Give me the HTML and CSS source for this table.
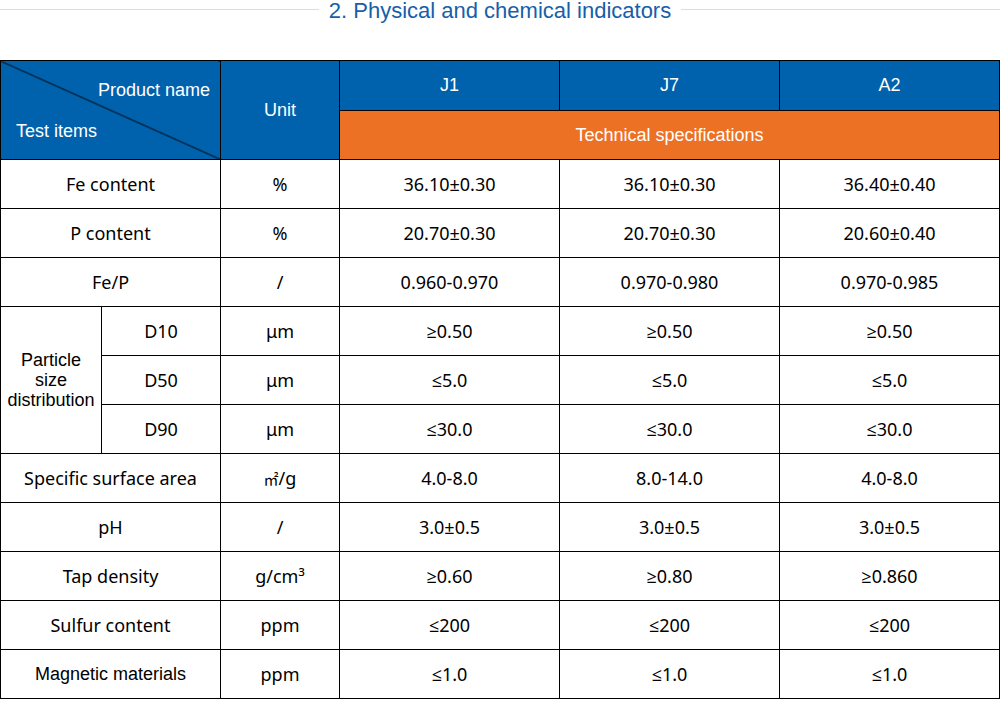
FILE: index.html
```
<!DOCTYPE html>
<html lang="en">
<head>
<meta charset="utf-8">
<title>Physical and chemical indicators</title>
<link rel="stylesheet" href="styles.css">
</head>
<body>
<div class="title-row">
  <span class="rule"></span>
  <h2 class="title">2. Physical and chemical indicators</h2>
  <span class="rule"></span>
</div>
<table class="spec">
  <colgroup>
    <col class="c-a"><col class="c-b"><col class="c-unit"><col class="c-v"><col class="c-v"><col class="c-v">
  </colgroup>
  <thead>
    <tr>
      <th class="hd diag" colspan="2" rowspan="2">
        <div class="diag-in">
          <span class="pn">Product name</span>
          <span class="ti">Test items</span>
        </div>
      </th>
      <th class="hd" rowspan="2">Unit</th>
      <th class="hd">J1</th>
      <th class="hd">J7</th>
      <th class="hd">A2</th>
    </tr>
    <tr>
      <th class="hd orange" colspan="3">Technical specifications</th>
    </tr>
  </thead>
  <tbody>
    <tr><td colspan="2">Fe content</td><td>%</td><td>36.10±0.30</td><td>36.10±0.30</td><td>36.40±0.40</td></tr>
    <tr><td colspan="2">P content</td><td>%</td><td>20.70±0.30</td><td>20.70±0.30</td><td>20.60±0.40</td></tr>
    <tr><td colspan="2">Fe/P</td><td>/</td><td>0.960-0.970</td><td>0.970-0.980</td><td>0.970-0.985</td></tr>
    <tr><td class="arial psd" rowspan="3">Particle<br>size<br>distribution</td><td>D10</td><td>μm</td><td>≥0.50</td><td>≥0.50</td><td>≥0.50</td></tr>
    <tr><td>D50</td><td>μm</td><td>≤5.0</td><td>≤5.0</td><td>≤5.0</td></tr>
    <tr><td>D90</td><td>μm</td><td>≤30.0</td><td>≤30.0</td><td>≤30.0</td></tr>
    <tr><td colspan="2">Specific surface area</td><td><span class="cjk">㎡</span>/g</td><td>4.0-8.0</td><td>8.0-14.0</td><td>4.0-8.0</td></tr>
    <tr><td colspan="2">pH</td><td>/</td><td>3.0±0.5</td><td>3.0±0.5</td><td>3.0±0.5</td></tr>
    <tr><td colspan="2">Tap density</td><td>g/cm³</td><td>≥0.60</td><td>≥0.80</td><td>≥0.860</td></tr>
    <tr><td colspan="2">Sulfur content</td><td>ppm</td><td>≤200</td><td>≤200</td><td>≤200</td></tr>
    <tr><td class="arial" colspan="2">Magnetic materials</td><td>ppm</td><td>≤1.0</td><td>≤1.0</td><td>≤1.0</td></tr>
  </tbody>
</table>
</body>
</html>
```
FILE: styles.css
```
html, body {
  margin: 0;
  padding: 0;
  background: #ffffff;
}

body {
  width: 1000px;
  font-family: "Noto Sans", "Open Sans", sans-serif;
  color: #000000;
}

.title-row {
  display: flex;
  align-items: center;
  height: 22px;
  gap: 10px;
  margin-bottom: 38px;
}

.rule {
  flex: 1;
  height: 1px;
  background: #dddddd;
  margin-top: -3px;
}

.title {
  margin: 0;
  font-family: "Liberation Sans", Arial, sans-serif;
  font-weight: normal;
  font-size: 22px;
  line-height: 22px;
  color: #1660a9;
  white-space: nowrap;
}

.spec {
  border-collapse: collapse;
  table-layout: fixed;
  width: 999px;
}

.c-a { width: 101px; }
.c-b { width: 119px; }
.c-unit { width: 119px; }
.c-v { width: 220px; }

.spec th,
.spec td {
  border: 1px solid #000000;
  padding: 0;
  text-align: center;
  vertical-align: middle;
}

.spec tr {
  height: 49px;
}

.spec td {
  font-size: 18px;
  line-height: 22px;
}

.hd {
  background: #0062ad;
  color: #ffffff;
  font-family: "Liberation Sans", Arial, sans-serif;
  font-weight: normal;
  font-size: 18px;
  line-height: 20px;
}

.orange {
  background: #ed7124;
}

.diag {
  background:
    linear-gradient(to top right, transparent calc(50% - 0.9px), #000000 50%, transparent calc(50% + 0.9px)),
    #0062ad;
}

.diag-in {
  display: flex;
  flex-direction: column;
  height: 98px;
  box-sizing: border-box;
  padding: 19px 10px 0 15px;
}

.pn {
  align-self: flex-end;
}

.ti {
  align-self: flex-start;
  margin-top: 21px;
}

.arial {
  font-family: "Liberation Sans", Arial, sans-serif;
}

.spec td.psd {
  font-size: 18px;
  line-height: 20px;
}

.cjk {
  font-family: "Noto Sans CJK SC", sans-serif;
  font-size: 15px;
}
```
